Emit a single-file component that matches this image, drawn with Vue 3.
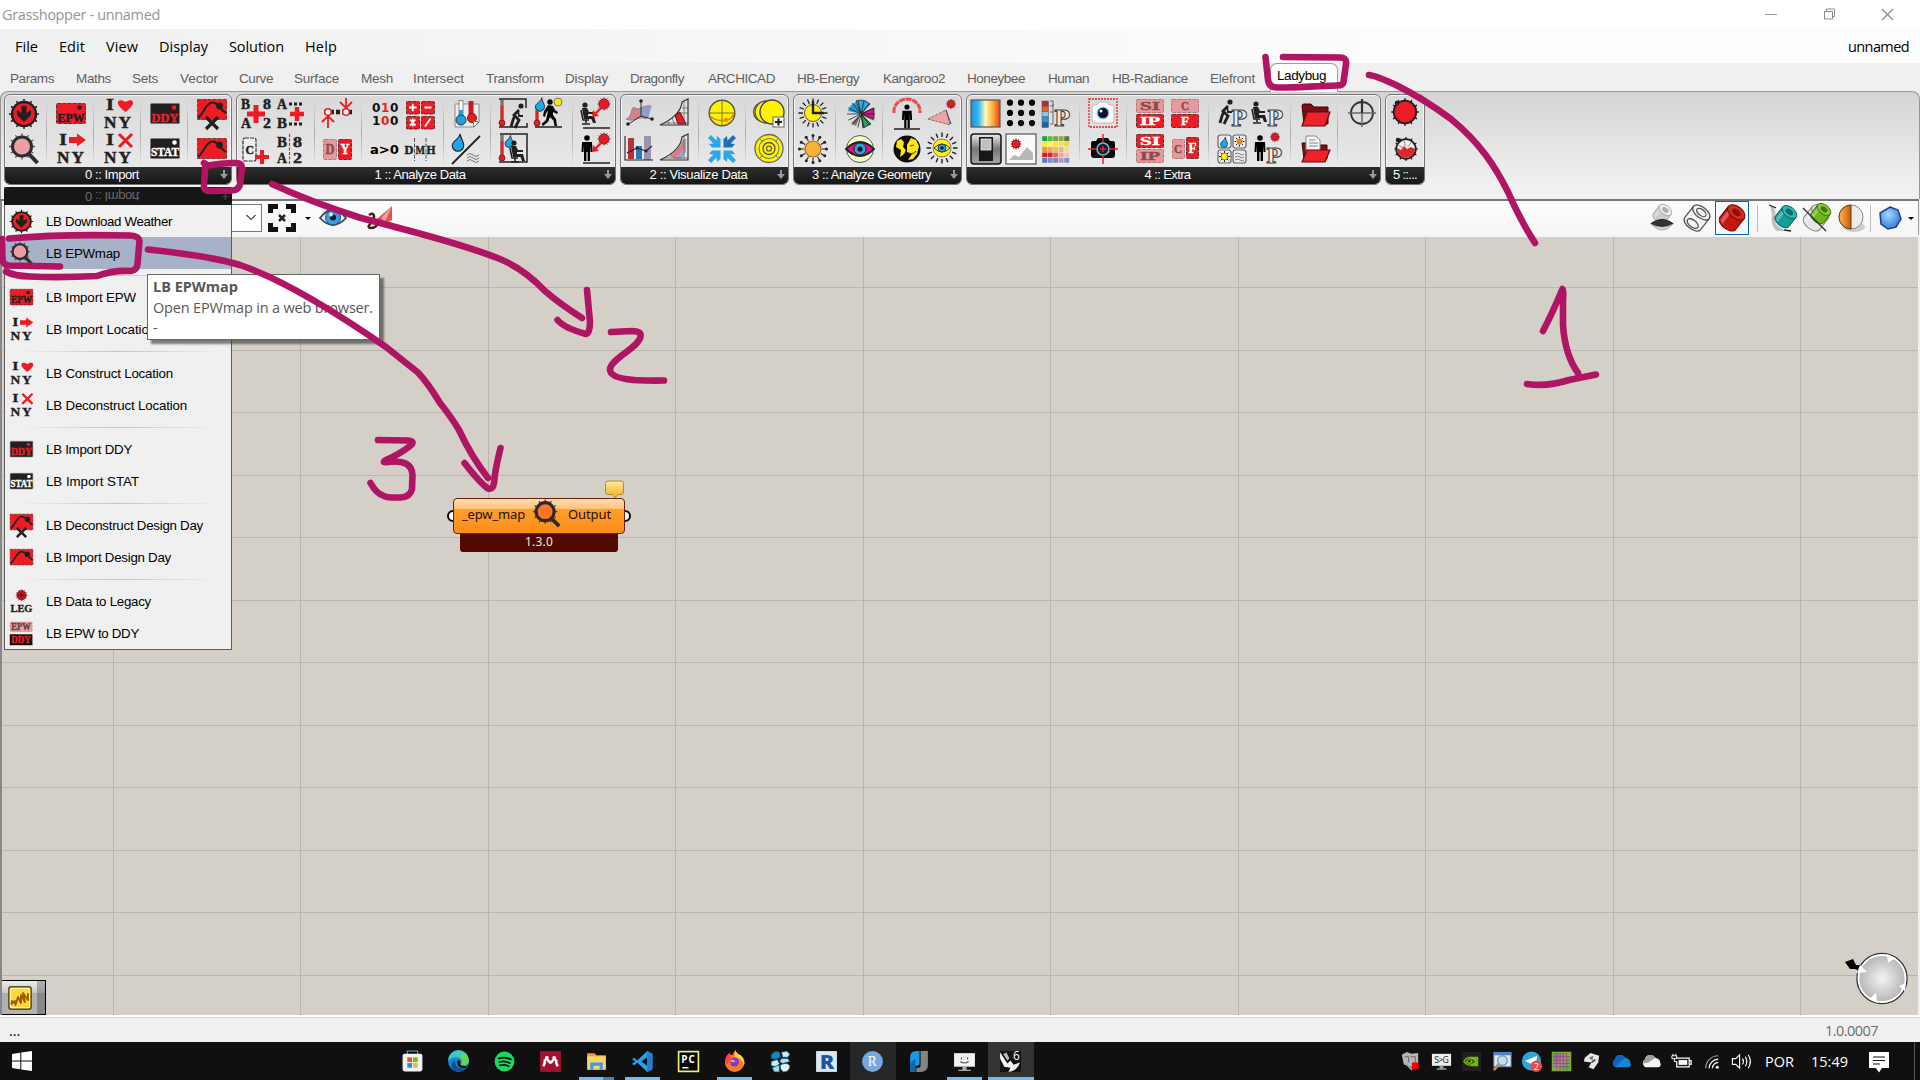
<script setup>
const RED = '#ed1c24'
const INK = '#231f20'
const PINK = '#e79a9e'

// Sets letter spacing so that a label takes the given width
const vFit = {
  mounted(el, { value }) {
    const natural = el.getBoundingClientRect().width
    const count = el.textContent.trim().length
    if (value && count > 1) el.style.letterSpacing = (value - natural) / count + 'px'
  }
}

/* ---------- small drawing helpers ---------- */
const T = (x, y, size, str, fill = INK, len = 0, extra = '') =>
  `<text x="${x}" y="${y}" font-family="'Liberation Serif',serif" font-weight="700" font-size="${(size * 1.14).toFixed(1)}" fill="${fill}" stroke="${fill}" stroke-width=".45" ${len ? `textLength="${len}" lengthAdjust="spacingAndGlyphs"` : ''} ${extra}>${str}</text>`
const ticks = (cx, cy, r1, r2, n, w = 1.4, c = INK, off = 0) => {
  let d = ''
  for (let i = 0; i < n; i++) {
    const a = ((i + off) * 2 * Math.PI) / n
    d += `M${(cx + r1 * Math.cos(a)).toFixed(1)} ${(cy + r1 * Math.sin(a)).toFixed(1)}L${(cx + r2 * Math.cos(a)).toFixed(1)} ${(cy + r2 * Math.sin(a)).toFixed(1)}`
  }
  return `<path d="${d}" stroke="${c}" stroke-width="${w}" fill="none"/>`
}
const plus = (x, y, s, w = 4) => `<path d="M${x - s} ${y}H${x + s}M${x} ${y - s}V${y + s}" stroke="${RED}" stroke-width="${w}"/>`
const line = (d, w = 2, c = INK, e = '') => `<path d="${d}" stroke="${c}" stroke-width="${w}" fill="none" ${e}/>`
const fill = (d, c = INK, e = '') => `<path d="${d}" fill="${c}" ${e}/>`
const box = (x, y, w, h, f, s = '#5b2224') => `<rect x="${x + .5}" y="${y + .5}" width="${w - 1}" height="${h - 1}" rx="1" fill="${f}" stroke="${s}" stroke-width=".9" stroke-dasharray="4 1"/>`
const circ = (x, y, r, f, s = 'none', w = 0) => `<circle cx="${x}" cy="${y}" r="${r}" fill="${f}" stroke="${s}" stroke-width="${w}"/>`
const orbit = (cx, cy, r, n, s) => Array.from({ length: n }, (_, i) => circ((cx + r * Math.cos(i * 2 * Math.PI / n)).toFixed(1), (cy + r * Math.sin(i * 2 * Math.PI / n)).toFixed(1), s, '#222')).join('')
const drop = (x, y, k = 1) => `<path transform="translate(${x} ${y}) scale(${k})" d="M2 -7C2 -3 5 -1 5 3A5 5 0 0 1 -5 3C-5 -1 1 -2 2 -7Z" fill="#1ba8e8" stroke="#222" stroke-width="1"/>`
const thermo = (x, y, h) => line(`M${x} ${y}V${y + h}`, 3.4, '#777') + line(`M${x} ${y + 6}V${y + h}`, 2.6, RED) + circ(x, y + h, 3, RED, '#6b1114', 0.8)
const bug = (x, y, r) => ticks(x, y, r, r + 1.6, 12, .8, '#701216') + circ(x, y, r, '#e21b23', '#8d1a20', 1)
const redArrow = (x, y) => line(`M${x + 8} ${y - 7}L${x + 2} ${y - 1}`, 2.4, RED) + fill(`M${x - 1} ${y + 2}L${x} ${y - 5}L${x + 6} ${y + 1}Z`, RED)
const peakShape = (dy) => `<rect x="1.500" y="${dy + .5}" width="29" height="20" fill="${RED}" stroke="#7b2a2d" stroke-width=".9" stroke-dasharray="4 1"/>` +
  line(`M2 ${dy + 19}C8 ${dy + 14} 10 ${dy + 4} 16 ${dy + 3.5}S22 ${dy + 9} 30 ${dy + 14}`, 2) + circ(23.5, dy + 7, 3.4, INK)
const sitter = (x, y) => circ(x + 4, y, 2.6, INK) + fill(`M${x + 1} ${y + 3}L${x + 6} ${y + 3}L${x + 8} ${y + 7}H${x + 13}V${y + 9}H${x + 7}V${y + 11}H${x + 13}L${x + 15} ${y + 18}H${x + 12}L${x + 10.5} ${y + 14}H${x + 3}Z`) +
  line(`M${x} ${y + 5}L${x + 2} ${y + 15}H${x + 8}M${x + 5} ${y + 15}V${y + 18}M${x + 1} ${y + 19}H${x + 9}`, 1.6)
const standing = (x, y, k = 1) => `<g transform="translate(${x} ${y}) scale(${k})"><circle cx="0" cy="0" r="2.8"/><path d="M-5 4H5L5.5 14H3.5L3 7V23H.6V14H-.6V23H-3V7L-3.5 14H-5.5Z"/></g>`
const walker = (x, y, k = 1) => `<g transform="translate(${x} ${y}) scale(${k})"><circle cx="0" cy="0" r="2.7"/><path d="M-2 3L3 4L5 8L8 10L7 12L3 10L3 13L6 17L7 24H4.5L3.5 18.5L0 15L-2 20L-7 24L-8.500 22L-4 18L-2 9L-4 11L-5 15L-7 14L-6 9Z"/></g>`
const bending = (x, y) => circ(x + 9, y, 2.6, INK) + line(`M${x + 7} ${y + 4}L${x + 2} ${y + 9}L${x + 7} ${y + 14}L${x + 3} ${y + 22}M${x + 3} ${y + 9}L${x + 1} ${y + 14}L${x - 1} ${y + 21}`, 2.8) + line(`M${x + 6} ${y + 5}L${x + 7} ${y + 10}L${x + 11} ${y + 10}`, 1.8)
const outlineP = (x, y, s = 22) => `<text x="${x}" y="${y}" font-family="'DejaVu Serif',serif" font-size="${s}" fill="#eee" stroke="#444" stroke-width="1.1" textLength="16" lengthAdjust="spacingAndGlyphs" font-weight="700">P</text>`
const tile = (x, y, w, h, str, on) => box(x, y, w, h, on ? RED : PINK, on ? '#5b2224' : '#b27072') + (str ? T(x + 4, y + h - 3, 11, str, on ? '#fff' : '#8d4a4d', w - 8) : '')
const waves = (x, y) => line(`M${x} ${y}q3-3 6 0t6 0M${x} ${y + 3}q3-3 6 0t6 0M${x} ${y + 6}q3-3 6 0t6 0`, 1, '#777')
const iny = T(4, 12, 15, 'I', INK, 8) + T(2, 30, 15, 'N', INK, 12.5) + T(16.500, 30, 15, 'Y', INK, 12.5)
const digit = (x, y, s, c = '#111') => `<text x="${x}" y="${y}" font-family="'DejaVu Sans',sans-serif" font-weight="700" font-size="13" fill="${c}" textLength="8.400" lengthAdjust="spacingAndGlyphs">${s}</text>`

const icons = {
  download: ticks(16, 16, 12, 15, 12, 1.5) + circ(16, 16, 12, RED, INK, 2.4) + fill('M13.500 8H18.500V15L23 12V17L16 24L9 17V12L13.500 15Z'),
  search: ticks(14, 13.500, 10, 13, 12, 1.3, '#555') + circ(14, 13.500, 9.500, '#eb9fa4', '#2d2d30', 3) + line('M21 21L29.500 30', 4, '#2d2d30'),
  searchOrange: ticks(14, 13.500, 10, 13, 12, 1.3, '#4a3a2c') + circ(14, 13.500, 9.600, '#ff7426', '#2b2b2b', 3.4) + line('M21 21L29 29', 4, '#2b2b2b'),
  epw: box(1, 5, 30, 21, RED) + circ(24.500, 9.500, 2.3, INK) + T(2.500, 23.500, 11.500, 'EPW', INK, 27),
  ny: iny + fill('M23.500 14C11 5 16 -1 23.500 4C31 -1 36 5 23.500 14Z', RED),
  nyArrow: iny + fill('M14 4H22V.5L31 7L22 13.500V10H14Z', RED),
  nyX: iny + line('M17 1L30 14M30 1L17 14', 3, RED),
  ddy: box(1, 5, 30, 21, INK, '#777') + circ(25, 9.500, 2.3, RED) + T(2.500, 23.500, 11.500, 'DDY', '#e5242b', 27),
  stat: box(1, 5, 30, 21, INK, '#777') + circ(25.500, 9.500, 2.3, '#fff') + T(2, 23, 10.500, 'STAT', '#fff', 28),
  ddCross: peakShape(1) + line('M10 19L22 31M22 19L10 31', 3.2),
  dd: peakShape(5),
  leg: bug(16, 8, 6) + ticks(16, 8, 0, 6, 9, .9, '#4a0d10') + T(2, 30, 11.500, 'LEG', INK, 28),
  epwddy: box(1, 1, 29, 13, '#e8a5a7', '#c08080') + T(3, 12, 10.500, 'EPW', '#6e3a3c', 25) + `<rect x="1" y="17" width="29" height="14" fill="#120a0a"/>` + T(3, 28.500, 11, 'DDY', '#e5242b', 25),

  ba82: T(1, 11, 12, 'B', INK, 9) + T(23, 11, 12, '8', INK, 8) + T(1, 30, 12, 'A', INK, 10) + T(23, 30, 12, '2', INK, 8) + plus(16, 16, 9, 5),
  abPlus: T(2, 11, 12, 'A', INK, 10) + T(2, 30, 12, 'B', INK, 10) + line('M14 6H27M14 26H27', 3, INK, 'stroke-dasharray="3 2"') + plus(22, 16, 7, 4.500),
  cPlus: `<rect x="3" y="5" width="13" height="23" rx="2" fill="#eee" stroke="#333" stroke-width="1.2" stroke-dasharray="4 1"/>` + T(5.500, 20.500, 11, 'C', '#222', 8.500) + plus(22, 24, 7, 4),
  ba82Split: T(2, 14, 13, 'B', INK, 10) + T(18, 14, 13, '8', INK, 9) + T(2, 30, 13, 'A', INK, 10) + T(18, 30, 13, '2', INK, 9) + line('M14.500 1V31', 1.2, RED, 'stroke-dasharray="3 1.500"'),
  rangeArrows: line('M2 14H30', 4.500, INK, 'stroke-dasharray="4 2"') + circ(6, 14, 3.300, '#fff', RED, 1.5) + circ(24, 14, 3.300, '#fff', RED, 1.500) + line('M24 0V9M18 4L24 10L30 4M6 30V18M0 24L6 18L12 24', 1.8, RED),
  dy: box(1, 6, 14, 21, PINK, '#b27072') + box(16, 6, 14, 21, RED) + T(3.500, 21, 12, 'D', '#8d4a4d', 9) + T(18.500, 21, 12, 'Y', '#fff', 9),
  binary: digit(3, 14, '0') + digit(12, 14, '1', RED) + digit(21, 14, '0') + digit(3, 27, '1') + digit(12, 27, '0', RED) + digit(21, 27, '0'),
  ops: [[2, 3, 'M5 9.500H12.500M8.750 5.700V13.300'], [17, 3, 'M20.500 9.500H27.500'], [2, 18, 'M6 21.500L11.500 27.500M11.500 21.500L6 27.500M8.750 20.500V28.500'], [17, 18, 'M26.500 20.500L21 28.500']].map(o => box(o[0], o[1], 14, 13.500, RED) + line(o[2], 1.8, '#fff')).join(''),
  agt0: `<text x="1" y="21" font-family="'DejaVu Sans',sans-serif" font-weight="700" font-size="13" textLength="29" lengthAdjust="spacingAndGlyphs">a&gt;0</text>`,
  dmh: T(.5, 20.500, 11.500, 'D', INK, 9) + T(11.500, 20.500, 11.500, 'M', INK, 9.500) + T(22.500, 20.500, 11.500, 'H', INK, 9) + line('M10.500 5V28M22 5V28', 1, '#555', 'stroke-dasharray="4 1.500"'),
  thermo2: `<path d="M4 6H28V24L23 29H4Z" fill="#ececec" stroke="#888"/>` + line('M10 2V20', 5, '#888') + line('M10 3V12', 3, '#fff') + line('M10 12V20', 4, '#1b9fe0') + circ(10, 22, 5, '#1b9fe0', '#333', 1) + line('M20 3V18', 5, '#c81a22') + circ(21, 20, 4.500, RED, '#7b1317', 1) + fill('M23 29L22 23L28 24Z', '#fff', 'stroke="#555" stroke-width=".8"'),
  dropWave: drop(7, 9, 1.15) + line('M1 31L29 3', 1.8) + waves(16, 22),
  bendRoom: thermo(4, 2, 23) + line('M1 1H28V10M1 29H29V25', 1.5) + bending(14, 8),
  walkHot: thermo(4, 7, 18) + drop(7, 6, .9) + circ(25, 4, 4, '#ffe600', '#777', 1) + walker(17, 4, 1) + line('M2 29H29', 1.4),
  sitRoom: thermo(4, 2, 23) + line('M2 1H29V29H1', 1.5) + drop(11, 8, .8) + sitter(12, 10),
  sitSun: sitter(1, 7) + bug(24, 6, 5) + redArrow(13, 17) + line('M3 30H30', 1.4),
  standSun: standing(7, 5) + bug(24, 6, 5) + redArrow(13, 17) + line('M3 30H30', 1.4),

  surface3d: fill('M2 21C8 20 6 11 10 9C14 14 20 6 27 8C24 13 26 19 22 21C15 17 10 25 2 21Z', '#cf8488', 'stroke="#777" stroke-width=".7"') + fill('M16 11C20 11 22 8 28 8C25 14 26 18 22 21C19 18 17 18 15 19Z', '#8fa0c8') + line('M17 3V18L3 27M17 18L28 21', .9) + circ(17, 3, 1.8, INK) + circ(4, 26, 1.8, INK) + circ(28, 21, 1.8, INK),
  psychRed: fill('M1 27C12 22 22 15 23 4L29 1V27Z', '#e3e3e3', 'stroke="#333" stroke-width="1.2"') + fill('M16 17L21 14L27 26H19Z', '#e11d25', 'stroke="#5a1013"') + line('M5 25H29M25 3V26M9 23L10 27M13 20L16 27M23 10H29M21 15H29', .7, '#555'),
  bars: `<rect x="4" y="5" width="6" height="21" fill="#b8303a"/><rect x="12" y="13" width="6" height="13" fill="#2679b5"/><rect x="20" y="3" width="7" height="24" fill="#9d92b0"/>` + line('M1 3V27H29M3 20L13 15L22 18L28 13', 1.1) + circ(13, 15, 1.5, INK) + circ(22, 18, 1.5, INK),
  psychBlue: fill('M1 27C12 22 22 15 23 4L29 1V27Z', '#e3e3e3', 'stroke="#333" stroke-width="1.2"') + fill('M10 23C18 18 22 12 24 6C28 10 25 20 16 26Z', '#d58086') + fill('M16 26C25 20 28 10 24 6L27 6V18L22 26Z', '#93a5cf') + line('M5 25H29M25 3V26', .7, '#555'),
  sunpath: circ(16, 15, 12.800, '#fff200', '#555', 1.5) + line('M16 2V28M3 15H29', 1, '#7a7500') + line('M4 18C8 22 14 23 20 22C25 22 27 18 28 15', 1.5, '#d08a12') + circ(20, 22, 2.200, '#f5871f'),
  spheres: circ(10, 14, 9.500, '#fff200', '#555', 1.3) + circ(13, 14, 11, '#fff200', '#555', 1.3) + circ(19, 14, 12, '#fff200', '#444', 1.4) + `<rect x="20" y="19" width="11" height="10" fill="#fff" stroke="#666"/>` + line('M22 24H29M25.500 20.500V27.500', 2.2),
  compress: [0, 90, 180, 270].map((r, i) => `<g transform="rotate(${r} 16 16)"><path d="M2 5L5 2L10.500 7.500L11 3L14.500 6V14.500H6L3 11L7.500 10.500Z" fill="${i === 1 ? '#1f6fb5' : '#28a8ea'}"/></g>`).join(''),
  rings: circ(16, 15.500, 14, '#fff200', '#666', 1.3) + circ(16, 15.500, 10, 'none', '#777', 1.1) + circ(16, 15.500, 6, 'none', '#555', 1.300) + circ(16, 15.500, 2.500, 'none', '#555', 1.2) + line('M7 6L10 9M25 6L22 9M7 25L10 22M25 25L22 22', 1, '#777'),
  sunHours: ticks(16, 15, 10, 14.500, 16, 1.300) + circ(16, 15, 8.500, '#fff200', '#555', 1) + line('M16 3V15H27', 2.4),
  rose: circ(17, 16, 13, '#dcdcdc') + fill('M17 16L4 13A13 13 0 0 1 12 4Z', '#1d9dd8') + fill('M17 16L12 3A14 14 0 0 1 26 6Z', '#29abe2', 'stroke="#222" stroke-width=".8"') + fill('M17 16L30 10V21Z', '#d6128a', 'stroke="#222" stroke-width=".8"') + fill('M17 16L27 26L19 30Z', '#22a565', 'stroke="#222" stroke-width=".8"') + fill('M17 16L12 28L7 25Z', '#777') + ticks(17, 16, 1, 14, 14, .8),
  body: line('M3 15V13A13 12 0 0 1 29 13V15', 3, '#ef4a50', 'stroke-dasharray="6 .7"') + standing(16, 9, .92) + line('M3 31H29', 1.5),
  shade: fill('M2 21L20 12L24 27Z', '#efa3a6', 'stroke="#777" stroke-width="1" stroke-dasharray="3 1"') + line('M20 12L25 26', 1, '#444') + bug(25, 6, 3.500),
  sunDots: ticks(16, 16, 9, 13, 12, 1.100) + orbit(16, 16, 13.500, 12, 1.500) + circ(16, 16, 8, '#fbb03b', '#9a6a22', 1.2),
  eyePink: circ(16, 16, 13.500, '#efffc8', '#555', 1) + fill('M2 16Q16 2 30 16Q16 30 2 16Z', '#e0148a', 'stroke="#222" stroke-width="1.8"') + circ(16, 16, 6, '#29a8e0', '#222', 1) + circ(16, 16, 2.600, '#111'),
  globe: circ(16, 16, 13.500, '#0c0c0c') + fill('M6 8L10 6L13 9L12 14L15 17L13 21L9 24L10 17L5 14Z', '#ffe612') + fill('M16 12L20 5L25 7L28 13L26 21L22 26L17 27L21 21L16 19Z', '#ffe612') + line('M19 13L23 12M19 20Q22 22 25 18', 1.1, '#4b4300'),
  sunEye: ticks(16, 15, 11, 15.500, 16, 1.400) + circ(16, 15, 9, '#fff200', '#777', 1) + fill('M8 15Q16 7 24 15Q16 23 8 15Z', '#e8f580', 'stroke="#333"') + circ(16, 15, 4, '#29a8e0', '#333', 1) + circ(16, 15, 1.700, '#111'),

  gradient: `<rect x="1" y="2" width="29" height="27" fill="url(#spectrum)" stroke="#555" stroke-width="1.2"/>`,
  dots: [5, 16, 27].map(y => [5, 16, 27].map(x => circ(x, y * .93, 3.1, '#080808')).join('')).join(''),
  legendP: ['#c1272d', '#f15a24', '#8cc7df', '#1b9fe0', '#1463a8'].map((c, i) => `<rect x="2" y="${3 + i * 5.300}" width="6.500" height="5.300" fill="${c}" stroke="#555" stroke-width=".5"/>`).join('') + line('M10 3H13V8H10M13 6V26H10M10 14H13', 1, '#666') + outlineP(14, 28),
  toggle: `<rect x="1" y="1" width="30" height="30" rx="3" fill="url(#metal)" stroke="#151515" stroke-width="1.500"/><rect x="9" y="4" width="14" height="24" fill="#171717"/><rect x="11" y="6" width="10" height="11" fill="#bfbfbf" stroke="#eee" stroke-width=".8"/>`,
  image: `<rect x="1" y="1" width="30" height="30" fill="#fafafa" stroke="#606060" stroke-width="1.300"/>` + bug(11, 11, 4) + fill('M4 27L9 22L14 24L22 14L28 20V27Z', '#b8b8b8'),
  palette: [['#16a05a', '#58b947', '#7ca04d', '#8ea651', '#5f7a38'], ['#f7e93b', '#fff25a', '#fbea3b', '#efdd6b', '#e8d650'], ['#f19a2a', '#f6a93b', '#f9b94d', '#e8b77a', '#f6d99b'], ['#c92228', '#d8262c', '#d86a6e', '#e8a7a9', '#efc3c5'], ['#6477b8', '#7d8bc8', '#8d7fc0', '#a89ad0', '#7e92cb']].map((r, j) => r.map((c, i) => `<rect x="${2 + i * 5.500}" y="${3 + j * 5.400}" width="5.500" height="5.400" fill="${c}" stroke="#f3f3c8" stroke-width=".4"/>`).join('')).join(''),
  cameraLight: `<rect x="2" y="1" width="28" height="28" fill="none" stroke="${RED}" stroke-width="1.300" stroke-dasharray="2 1"/><path d="M5 9Q5 7 7 7H10L12 4H20L22 7H25Q27 7 27 9V22Q27 25 24 25H8Q5 25 5 22Z" fill="#fafafa" stroke="#bbb"/>` + circ(16, 15, 6, '#174a85', '#ccc', 1) + circ(16, 15, 4.500, '#061525') + circ(14, 13, 1.500, '#fff'),
  cameraDark: `<path d="M4 10Q4 8 6 8H9L11 5H21L23 8H26Q28 8 28 10V22Q28 25 25 25H7Q4 25 4 22Z" fill="#090909"/>` + circ(16, 16, 6, '#13232b', '#78bcd4', 1.600) + line('M16 1V9M16 13V19M16 23V31M1 16H9M13 16H19M23 16H31', 1.500, RED),
  siIp: tile(2, 1, 28, 14, 'SI', false) + tile(2, 16, 28, 14, 'IP', true),
  siIp2: tile(2, 1, 28, 14, 'SI', true) + tile(2, 16, 28, 14, 'IP', false),
  cf: tile(2, 1, 28, 14, '', false) + tile(2, 16, 28, 14, '', true) + T(12, 12, 11, 'C', '#8d4a4d', 8) + T(12, 27, 11, 'F', '#fff', 8),
  cfSide: box(3, 6, 13, 20, PINK, '#b27072') + box(17, 4, 13, 22, RED) + T(5, 20, 11, 'C', '#8d4a4d', 8) + T(19.500, 20, 12, 'F', '#fff', 8),
  bendP: bending(5, 4) + outlineP(15, 28),
  sitP: sitter(0, 6) + outlineP(15, 28),
  climate: [[2, 2], [17, 2], [2, 17], [17, 17]].map(p => `<rect x="${p[0]}" y="${p[1]}" width="13" height="13" rx="2.500" fill="#eee" stroke="#666" stroke-width="1.200"/>`).join('') + drop(8, 9, .7) + ticks(23.500, 8.500, 3, 5, 8, 1) + circ(23.500, 8.500, 3, '#e8871e') + ticks(8.500, 23.500, 3, 5.500, 8, 1) + circ(8.500, 23.500, 3.500, '#fff200', '#555', .8) + line('M19 21q2.500-2 5 0t4 0M19 24q2.500-2 5 0t4 0M19 27q2.500-2 5 0t4 0', 1, '#777'),
  standP: standing(8, 5) + bug(23, 4, 3.500) + outlineP(14, 30, 21),
  folder: fill('M3 8Q3 6 5 6H12L15 9H29V26H5Z', '#7d0f14', 'stroke="#3c0709"') + fill('M3 28L8 14H31L26 28Z', '#ee2229', 'stroke="#5d0d10" stroke-width="1.200"'),
  folderDoc: fill('M3 10H9L12 12H28V26H5Z', '#7d0f14', 'stroke="#3c0709"') + `<path d="M7 3H17L21 7V20H7Z" fill="#f5f5f5" stroke="#888"/><path d="M10 7H16M10 10H19M10 13H19" stroke="#888" fill="none"/>` + fill('M3 29L8 17H31L26 29Z', '#ee2229', 'stroke="#5d0d10" stroke-width="1.200"'),
  target: circ(16, 15, 11, 'none', '#333', 1.800) + line('M16 1V29M2 15H30', 1.500, '#666') + line('M16 1V15', 2.200, '#333'),
  bugBig: ticks(16, 14, 11, 13.800, 12, 1.500) + circ(16, 14, 11.300, RED, INK, 1.800) + circ(8, 5, 2.300, INK),
  bugHalf: ticks(17, 16, 10, 12, 12, 1.200) + circ(17, 16, 9.800, '#eee', INK, 1.800) + fill('M8 15L12 17L15 13L18 16L22 14L26 16A9 9 0 0 1 8 16Z', '#e3222a') + ticks(17, 16, 3, 8, 7, .7, '#b3464a') + circ(9, 7, 2.300, INK)
}

const ribbon = [
  { title: '0 :: Import', w: 228, tw: 54, groups: [[['download'], ['search']], [['epw'], ['nyArrow']], [['ny'], ['nyX']], [['ddy'], ['stat']], [['ddCross'], ['dd']]] },
  { title: '1 :: Analyze Data', w: 380, tw: 91, groups: [[['ba82', 'abPlus'], ['cPlus', 'ba82Split']], [['rangeArrows'], ['dy']], [['binary', 'ops'], ['agt0', 'dmh']], [['thermo2'], ['dropWave']], [['bendRoom', 'walkHot'], ['sitRoom', '']], [['sitSun'], ['standSun']]] },
  { title: '2 :: Visualize Data', w: 169, tw: 98, groups: [[['surface3d', 'psychRed'], ['bars', 'psychBlue']], [['sunpath'], ['compress']], [['spheres'], ['rings']]] },
  { title: '3 :: Analyze Geometry', w: 169, tw: 119, groups: [[['sunHours'], ['sunDots']], [['rose'], ['eyePink']], [['body', 'shade'], ['globe', 'sunEye']]] },
  { title: '4 :: Extra', w: 415, tw: 46, groups: [[['gradient', 'dots', 'legendP'], ['toggle', 'image', 'palette']], [['cameraLight'], ['cameraDark']], [['siIp', 'cf'], ['siIp2', 'cfSide']], [['bendP', 'sitP'], ['climate', 'standP']], [['folder'], ['folderDoc']], [['target'], ['']]] },
  { title: '5 ::...', w: 40, tw: 24, small: true, groups: [[['bugBig'], ['bugHalf']]] }
]

const menu = [['File', 44, 23], ['Edit', 47, 26], ['View', 53, 32], ['Display', 70, 49], ['Solution', 76, 55], ['Help', 50, 32]]
const tabs = [['Params', 66, 44], ['Maths', 56, 35], ['Sets', 48, 26], ['Vector', 59, 38], ['Curve', 55, 34], ['Surface', 67, 45], ['Mesh', 52, 32], ['Intersect', 73, 51], ['Transform', 79, 58], ['Display', 65, 43], ['Dragonfly', 78, 54], ['ARCHICAD', 89, 67], ['HB-Energy', 86, 62], ['Kangaroo2', 84, 62], ['Honeybee', 81, 58], ['Human', 64, 41], ['HB-Radiance', 98, 76], ['Elefront', 60, 45]]

const dropdown = [
  ['download', 'LB Download Weather', 126], ['search', 'LB EPWmap', 74, true], null,
  ['epw', 'LB Import EPW', 90], ['nyArrow', 'LB Import Location', 110], null,
  ['ny', 'LB Construct Location', 127], ['nyX', 'LB Deconstruct Location', 141], null,
  ['ddy', 'LB Import DDY', 86], ['stat', 'LB Import STAT', 93], null,
  ['ddCross', 'LB Deconstruct Design Day', 157], ['dd', 'LB Import Design Day', 125], null,
  ['leg', 'LB Data to Legacy', 105], ['epwddy', 'LB EPW to DDY', 93]
]

const gridX = [113, 300, 488, 675, 863, 1050, 1238, 1425, 1613, 1800]
const gridY = [287, 350, 412, 475, 537, 600, 662, 725, 787, 850, 912, 975]

/* viewport display toggles, 30 x 30 */
const can = (c1, c2, c3) => `<g transform="rotate(38 15 15)"><path d="M5 8V22A10 5.500 0 0 0 25 22V8Z" fill="${c1}" stroke="${c3}"/><path d="M7 11V23Q9 25 11 26V13Z" fill="#fff" opacity=".3"/><ellipse cx="15" cy="8" rx="10" ry="6" fill="${c2}" stroke="${c3}"/><ellipse cx="15" cy="8" rx="5" ry="3" fill="${c3}" opacity=".75"/></g>`
const viewIcons = {
  hidden: `<g transform="translate(3.500 -1) scale(.78)">${can('#ccc', '#eee', '#999')}</g><path d="M3 21Q15 12 27 21Q15 27 3 21Z" fill="#333" stroke="#222"/><path d="M4 22Q15 34 26 22Q15 28 4 22Z" fill="#ddd" stroke="#888" stroke-width=".7"/>`,
  wire: `<g transform="rotate(38 15 15)" fill="#f5f5f5" stroke="#555" stroke-width="1.300"><path d="M5 8V22A10 5.500 0 0 0 25 22V8Z"/><ellipse cx="15" cy="8" rx="10" ry="5.500"/><ellipse cx="15" cy="8" rx="5.500" ry="3"/><ellipse cx="15" cy="22" rx="6.500" ry="3.500"/></g>`,
  shaded: can('#c9160c', '#d62c1f', '#6d0904'),
  teal: '<path d="M3 2Q10 5 8 14Q6 24 22 28L10 28Q3 22 5 12Z" fill="#999" opacity=".6"/><g transform="translate(6 1) scale(.85)">' + can('#149c98', '#25b9b2', '#07524f') + '</g><path d="M2 2L9 5M17 27L24 28" stroke="#222" stroke-width="1.300"/>',
  green: can('#e5e5e5', '#ddd', '#888') + '<g transform="translate(8 -1) scale(.78)">' + can('#6eb51c', '#86cd2b', '#2f5709') + '</g><path d="M2 5L25 28" stroke="#333" stroke-width="1.500"/>',
  half: '<ellipse cx="18" cy="24" rx="11" ry="5" fill="#bbb" opacity=".7"/><circle cx="15" cy="14" r="12" fill="#ececec" stroke="#888"/><path d="M15 2A12 12 0 0 0 15 26Z" fill="url(#orangeHalf)" stroke="#6d3a05"/>',
  poly: '<path d="M15 4L23 7L26 16L21 24L13 26L6 21L5 10Z" fill="url(#blueGem)" stroke="#233f8b" stroke-width="1.500"/>'
}

/* taskbar, 24 x 24 */
const task = [
  ['<path d="M7 5V2H17V5" fill="none" stroke="#3bb6e6"/><rect x="2.500" y="4.500" width="19" height="17" rx="2" fill="#f2f2f2"/><path d="M7 8H11.500V12.500H7Z" fill="#f25022"/><path d="M12.500 8H17V12.500H12.500Z" fill="#7fba00"/><path d="M7 13.500H11.500V18H7Z" fill="#1795d4"/><path d="M12.500 13.500H17V18H12.500Z" fill="#efb53c"/>'],
  ['<circle cx="12" cy="12" r="10" fill="#1686d9"/><path d="M2 11A10 10 0 0 1 22 11C22 15 18 17 14 15C17 11 13 7 9 8C5 8 3 11 2 11Z" fill="#3cc8c8"/><path d="M17 4A10 10 0 0 1 22 12C21 15 17 16.500 14 15C17 11 15 8 13 7Z" fill="#67d655"/><path d="M9 11C8 17 13 20 20 18C16 23 10 23 6 19C4 15 6 11 9 11Z" fill="#0d4f97"/><path d="M11 11C13 10 15 12 13.500 14.500C14 16 17 17 20 16L19 18C13 19 10 16 11 11Z" fill="#101010"/>'],
  ['<circle cx="12" cy="12" r="9.500" fill="#1ed760"/><path d="M6.500 9Q12 7 18 10M7 12.500Q12 11 17 13.500M7.500 15.700Q12 14.500 16 16.500" stroke="#101010" stroke-width="1.700" fill="none" stroke-linecap="round"/>'],
  ['<rect x="2" y="2" width="20" height="20" fill="#a5122f"/><path d="M5 16.500Q7 14 6.500 11Q8.500 8.500 10 11.500Q12 15 14 11.500Q15.500 8.500 17.500 11Q17 14 19 16.500M12 13V11" stroke="#fff" stroke-width="2.400" fill="none"/><circle cx="8.500" cy="8.500" r="1.800" fill="#fff"/><circle cx="15.500" cy="8.500" r="1.800" fill="#fff"/>'],
  ['<path d="M3 4H10L12 6H21V10H3Z" fill="#e9a12a"/><rect x="3" y="7" width="18" height="13" fill="#fbd36b"/><path d="M6 20V13H18V20H15V16H9V20Z" fill="#3b9be3"/>', 'split'],
  ['<path d="M16.500 2L21.500 4.500V19.500L16.500 22L7 13L4 15.500L2 14.500L5 12L2 9.500L4 8.500L7 11ZM16.500 8L11 12L16.500 16Z" fill="#2d9fe8" fill-rule="evenodd"/><path d="M16.500 2L21.500 4.500V19.500L16.500 22Z" fill="#1f80cf"/>', 'run'],
  ['<rect x="2.500" y="2.500" width="19" height="19" fill="#080808" stroke="#f3f169" stroke-width="1.600"/><text x="5" y="13" font-family="Open Sans,sans-serif" font-size="9.500" font-weight="700" fill="#fff" textLength="13">PC</text><path d="M6 18H12" stroke="#fff" stroke-width="1.400"/>'],
  ['<path d="M12 22A9.500 9.500 0 0 1 3 11Q4 6 7 4Q8 6 10 6Q11 3 13 1Q14 5 18 6Q22 10 21.500 14A9.500 9.500 0 0 1 12 22Z" fill="#ff7a1f"/><path d="M13 1Q14 5 18 6Q23 11 21 16Q19 8 12 8Z" fill="#ffd22e"/><path d="M3 11Q4 6 7 4L9 8L5 15Q3 13 3 11Z" fill="#ff3e48"/><circle cx="12" cy="12.500" r="4.300" fill="#7b3ad0"/><path d="M8 11Q11 9 13 12Q9 14 8 11Z" fill="#ffb12c"/>', 'run'],
  ['<g stroke="#0b4f6e" stroke-width=".7"><path d="M3 6Q6 1 11 3L12 8L7 10L3 9Z" fill="#1187bd"/><path d="M13 3L18 2L21 5L19 8L14 8Z" fill="#cde9f2"/><path d="M13 9L19 9L21 12L14 14L11 12Z" fill="#b7dded"/><path d="M3 12L9 10L11 14L8 17L3 16Z" fill="#cde9f2"/><path d="M12 15Q20 12 21 17Q20 22 15 22Q11 20 12 15Z" fill="#e5f4f8"/><path d="M4 18L11 15L11 22L6 22Z" fill="#a8d8ea"/></g>'],
  ['<rect x="2" y="2" width="20" height="20" fill="#dbe8f4"/><text x="5.500" y="19" font-family="Open Sans,sans-serif" font-size="18" font-weight="800" fill="#1b56a5" textLength="14" lengthAdjust="spacingAndGlyphs">R</text>'],
  ['<circle cx="12" cy="12" r="10" fill="#75a9dc"/><text x="7.500" y="16.500" font-family="Liberation Serif,serif" font-size="13" fill="#fff">R</text>', 'hover'],
  ['<path d="M4 22V8Q4 2 10 2H13V14Q13 16 11 16H9V22Z" fill="#189be2"/><path d="M4 22V14L9 9V22Z" fill="#0c68ad"/><path d="M14 2H21V15Q21 22 14 22H10V18H12Q14 18 14 15Z" fill="#858585"/>'],
  ['<rect x="2" y="4" width="20" height="13" fill="#f2f2f2"/><path d="M9 8V10M15 8V10M8 12Q12 15 16 12" stroke="#555" fill="none"/><path d="M10 17H14V20H18V21H6V20H10Z" fill="#aaa"/>', 'run'],
  ['<rect x="2" y="2" width="20" height="20" fill="#111"/><path d="M2 3L9 14L12 11L15 15L21 13Q20 18 14 21L10 22L12 18L6 17L2 9Z" fill="#f3f3f3"/><path d="M8 3L11 9L9 11L5 5Z" fill="#bbb"/><text x="14.500" y="10.500" font-family="Open Sans,sans-serif" font-size="11.500" fill="#fff">6</text>', 'active']
]
const tray = [
  '<path d="M3 5L8 2L13 4L20 3V14L14 18L5 15Z" fill="#b5b5b5"/><path d="M6 7H10V13M12 7H17V14" stroke="#666" fill="none"/><path d="M7 14L13 20L16 17" stroke="#8fa8c0" stroke-width="2" fill="none"/><rect x="13.500" y="13" width="7" height="7" fill="#f50000"/>',
  '<rect x="2" y="4" width="20" height="12.500" fill="#eee"/><text x="4.500" y="13.500" font-family="Open Sans,sans-serif" font-size="9" fill="#222" textLength="15">S&gt;G</text><path d="M10 16.500H14V19H17V20.500H7V19H10Z" fill="#999"/>',
  '<rect x="2" y="2" width="20" height="20" fill="#202020"/><rect x="11" y="7" width="8" height="10" fill="#76b900"/><path d="M4 12Q9 4 17 11Q11 20 4 12ZM7 12Q10 7 14 11Q10 16 7 12Z" fill="none" stroke="#76b900" stroke-width="1.400"/><path d="M12 10L15 12L12 14" stroke="#111" fill="none"/>',
  '<rect x="4" y="2.500" width="18" height="15" fill="#dde9f3" stroke="#587fb5"/><rect x="4" y="2.500" width="18" height="3" fill="#4c83ca"/><circle cx="13" cy="11" r="5" fill="#bfe2f2" stroke="#8094a5" stroke-width="1.400"/><path d="M9 15L4 21" stroke="#c98551" stroke-width="3"/>',
  '<circle cx="12" cy="11.500" r="10" fill="#2ca5df"/><path d="M5 11.500L18 6L16 17L11 14Z" fill="#fff"/><circle cx="17" cy="17" r="6" fill="#ea4b43"/><text x="14.300" y="20.500" font-family="Open Sans,sans-serif" font-size="9.500" fill="#fff">2</text>',
  '<rect x="2.500" y="2.500" width="19" height="19" fill="url(#chip)" stroke="#6cb52b" stroke-width="1.400"/><path d="M3 7H21M3 10.500H21M3 14H21M3 17.500H21M7 3V21M10.500 3V21M14 3V21M17.500 3V21" stroke="#3c4a55" stroke-width=".5"/>',
  '<path d="M5 8L11 3L20 6L19 13L14 20L9 18L12 13L4 12Z" fill="#e8e8e8"/><path d="M9 8L14 6L13 11Z" fill="#777"/><path d="M12 13L16 10" stroke="#333" stroke-width="1.500"/>',
  '<path d="M6 18A4.500 4.500 0 0 1 5 10A6 6 0 0 1 16 8Q21 9 21 13Q23 17 19 18Z" fill="#1686dc"/><path d="M6 18A4.500 4.500 0 0 1 5 10A6 6 0 0 1 16 8L10 13Z" fill="#1063bd"/>',
  '<path d="M6 18A4.500 4.500 0 0 1 5 10A6 6 0 0 1 16 8Q21 9 21 13Q23 17 19 18Z" fill="#f4f4f4"/><path d="M3 14A4.500 4.500 0 0 1 5 10A6 6 0 0 1 16 8L9 13Z" fill="#a0a0a0"/>',
  '<path d="M7 8.500H20V17.500H7V12M20 11H22V15H20" fill="none" stroke="#fff" stroke-width="1.300"/><rect x="9" y="10.500" width="9" height="5" fill="#fff"/><path d="M2 6H7V9H2ZM3 4V6M6 4V6M4.500 9V12H7" stroke="#fff" fill="none"/>',
  '<circle cx="18" cy="18" r="1.600" fill="#fff"/><path d="M13 19A6 6 0 0 1 19 13M9.500 19A10 10 0 0 1 19 9.500" fill="none" stroke="#fff" stroke-width="1.300"/><path d="M6 19A13 13 0 0 1 19 6" fill="none" stroke="#999" stroke-width="1.300"/>',
  '<path d="M2.500 9H6L10 5V19L6 15H2.500Z" fill="none" stroke="#fff" stroke-width="1.200"/><path d="M13 9Q15 12 13 15M16 7Q19 12 16 17M19 5Q23.500 12 19 19" fill="none" stroke="#fff" stroke-width="1.200"/>'
]

const strokes = [
  'M1283 57L1339 57.500Q1347 57 1346 64L1343.500 82Q1343 85.500 1337 85.500C1315 86 1290 88 1276 87.500Q1269 87 1268 80L1265.500 57',
  'M204 163L208 165.500Q223 162.500 236 163Q242 163 242 168L240 184Q239 190 232 190.500L209 191Q203 190.500 204 184L205.500 165',
  'M272 184C300 197 330 208 358 217C400 229 452 240 500 259Q524 269 545 291Q560 304 582 318',
  'M557.500 320Q564 328 586 334Q590 333 590 322L587 290',
  'M611 332L632 331Q642 331 640.500 337C638 348 609 360 610 370C611 380 637 381 664 380.500',
  'M2 239L2.500 259Q3 265 9 265.500L60 266.500',
  'M9 238.500Q60 234 130 235.500Q139 236 139.500 241L137.500 264Q137 270 131 271Q113 270 97 276Q60 278 30 276.500Q14 276 6 271.500',
  'M148 249.500Q210 256 240 265C290 282 350 322 386 347Q406 363 418 372.500Q428 383 440 403Q452 418 459 430C466 445 474 460 488 478',
  'M464.500 463Q480 483 488 488.500Q493 490 494 483Q495 470 500.500 448',
  'M378 440L408 440.500Q416 441 410 446Q400 454 385 460.500Q382 463 388 462Q412 459 412.500 475L412 489Q410 497 401 497.500Q386 498 383 495.500Q376 493 370.500 483',
  'M1369 75Q1374 75 1396 85Q1424 99 1451 119C1480 143 1495 166 1508 192C1518 215 1526 229 1535 243',
  'M1543 331Q1552 314 1562.500 289Q1564 290 1563 300V325Q1565 355 1578 373',
  'M1527 384Q1547 387 1569 380L1596 374.500'
]
</script>

<template>
  <div class="screen">
    <header class="titlebar">
      <span v-fit="158" class="app-title">Grasshopper - unnamed</span>
      <div class="window-buttons">
        <svg width="12" height="12"><path d="M0 6.500H12" stroke="#999" /></svg>
        <svg width="12" height="12"><path d="M1.500 3.500H9.500V11H1.500ZM3.500 3V1H11.500V8.500H10" fill="none" stroke="#888" /></svg>
        <svg width="13" height="13"><path d="M1 1L12 12M12 1L1 12" stroke="#888" stroke-width="1.200" /></svg>
      </div>
    </header>

    <nav class="menubar">
      <div v-for="m in menu" :key="m[0]" class="menu-item" :style="{ width: m[1] + 'px' }"><span v-fit="m[2]">{{ m[0] }}</span></div>
      <span v-fit="61" class="doc">unnamed</span>
    </nav>

    <nav class="tabs">
      <div v-for="t in tabs" :key="t[0]" class="tab" :style="{ width: t[1] + 'px' }"><span v-fit="t[2]">{{ t[0] }}</span></div>
      <div class="tab-active"><span v-fit="49">Ladybug</span></div>
    </nav>

    <section class="ribbon">
      <div v-for="p in ribbon" :key="p.title" class="panel" :style="{ width: p.w + 'px' }">
        <div class="panel-body">
          <div v-for="(g, gi) in p.groups" :key="gi" class="group">
            <div v-for="(row, ri) in g" :key="ri" class="group-row">
              <div v-for="(ic, ci) in row" :key="ci" class="cell">
                <svg v-if="ic" width="32" height="32" viewBox="0 0 32 32" v-html="icons[ic]"></svg>
              </div>
            </div>
          </div>
        </div>
        <div class="panel-title" :class="{ narrow: p.small }">
          <span v-fit="p.tw">{{ p.title }}</span>
          <svg v-if="!p.small" class="expand" width="10" height="12"><path d="M5 1V7" stroke="#999" stroke-width="2" /><path d="M1 5H9L5 10Z" fill="#999" /></svg>
        </div>
      </div>
    </section>

    <section class="toolbar">
      <div class="combo"><svg width="12" height="8"><path d="M1.500 1L6 5.500L10.500 1" fill="none" stroke="#444" stroke-width="1.100" /></svg></div>
      <svg class="extents" width="28" height="28"><path d="M2.500 9V2.500H10M18 2.500H25.500V9M25.500 19V25.500H18M10 25.500H2.500V19" fill="none" stroke="#111" stroke-width="5" /><path d="M11 11L17 17M17 11L11 17" stroke="#222" stroke-width="2.500" /></svg>
      <i class="caret"></i>
      <svg class="eye" width="30" height="24"><path d="M2 12Q15 -5 28 12Q15 26 2 12Z" fill="#edf4f8" stroke="#39464e" stroke-width="1.800" /><circle cx="15" cy="11.500" r="7.500" fill="#3a9be0" stroke="#174d7d" /><circle cx="15" cy="11.500" r="3" fill="#0a1c30" /><circle cx="13" cy="8.500" r="2" fill="#d9f2ff" /></svg>
      <i class="caret second"></i>
      <svg class="pen" width="30" height="28"><path d="M12 15L27 2L27 16L17 21Z" fill="#dc5550" /><path d="M16 14L27 2L20 18Z" fill="#f3a09a" /><path d="M4 11Q8 8 9 12Q9 17 5 20Q2 24 6 24Q11 24 13 19" fill="none" stroke="#4a1a14" stroke-width="2.600" /></svg>
      <div class="views">
        <div class="view"><svg width="28" height="30" viewBox="0 0 30 30" v-html="viewIcons.hidden"></svg></div>
        <div class="view"><svg width="30" height="30" v-html="viewIcons.wire"></svg></div>
        <div class="view selected"><svg width="30" height="30" v-html="viewIcons.shaded"></svg></div>
        <i class="rule"></i>
        <div class="view teal"><svg width="30" height="30" v-html="viewIcons.teal"></svg></div>
        <div class="view"><svg width="30" height="30" v-html="viewIcons.green"></svg></div>
        <div class="view"><svg width="30" height="30" v-html="viewIcons.half"></svg></div>
        <i class="rule tight"></i>
        <div class="view gem"><svg width="30" height="30" v-html="viewIcons.poly"></svg></div>
        <i class="caret"></i>
      </div>
    </section>

    <main class="canvas">
      <svg class="grid" width="1916" height="778" viewBox="2 237 1916 778">
        <rect v-for="x in gridX" :key="'x' + x" :x="x" y="237" width="1" height="778" fill="#bab6af" />
        <rect v-for="y in gridY" :key="'y' + y" x="2" :y="y" width="1916" height="1" fill="#bab6af" />
      </svg>

      <div class="node">
        <svg class="balloon" width="20" height="20"><path d="M3 1H16Q18.500 1 18.500 3.500V12Q18.500 14.500 16 14.500H13L10 18L7 14.500H3Q.5 14.500 .5 12V3.500Q.5 1 3 1Z" fill="url(#gold)" stroke="#b58a2b" /></svg>
        <i class="grip left"></i><i class="grip right"></i>
        <div class="node-body">
          <span v-fit="63">_epw_map</span>
          <svg width="30" height="30" viewBox="0 0 32 32" v-html="icons.searchOrange"></svg>
          <span v-fit="43">Output</span>
        </div>
        <div class="node-foot"><span v-fit="28">1.3.0</span></div>
      </div>

      <div class="markov">
        <svg width="24" height="24"><rect x=".8" y=".8" width="22.400" height="22.400" rx="2.500" fill="#ffd83a" stroke="#5d4f22" stroke-width="1.500" /><rect x="2.500" y="2.500" width="19" height="19" fill="none" stroke="#fff1a0" /><path d="M4 15L3.500 18L7 15L7.500 19L10 11L13 17L13 9L17 16L15 7L20 14V8" fill="none" stroke="#a35a08" stroke-width="1.900" stroke-linejoin="round" stroke-linecap="round" /></svg>
      </div>

      <svg class="compass" width="66" height="56"><path d="M1 11L9 8L12 14L16 14L16 20L11 18L6 18Z" fill="#000" /><circle cx="38" cy="27.500" r="25" fill="url(#dial)" stroke="#333" stroke-width="1.400" /><circle cx="38" cy="27.500" r="23.500" fill="none" stroke="#fff" stroke-width="1.800" /><path d="M43 3L51 7L44 12ZM62 32L55 35L61 40ZM33 52L25 48L32 42ZM13 22L16 14L23 21Z" fill="#fff" /></svg>
    </main>

    <footer class="status"><span class="dots">...</span><span v-fit="53" class="version">1.0.0007</span></footer>

    <footer class="taskbar">
      <svg class="start" width="20" height="20"><path d="M0 3L8.300 1.800V9.400H0ZM9.300 1.600L20 0V9.400H9.300ZM0 10.400H8.300V18.200L0 17ZM9.300 10.400H20V20L9.300 18.400Z" fill="#fff" /></svg>
      <div class="apps">
        <div v-for="(a, i) in task" :key="i" class="app" :class="a[1]"><svg width="25" height="25" viewBox="0 0 24 24" v-html="a[0]"></svg></div>
      </div>
      <div class="tray">
        <div v-for="(a, i) in tray" :key="i" class="tray-cell"><svg width="23" height="23" viewBox="0 0 24 24" v-html="a"></svg></div>
        <span v-fit="28" class="lang">POR</span>
        <span v-fit="34" class="clock">15:49</span>
        <svg class="note" width="20" height="21"><path d="M0 0H20V16H13L10 20.500L7 16H0Z" fill="#fff" /><path d="M4 5H16M4 8.500H16M4 12H11" stroke="#111" stroke-width="1.200" /></svg>
        <i class="desk"></i>
      </div>
    </footer>

    <aside class="dropdown">
      <div class="drop-head"><span v-fit="54">0 :: Import</span><b>+</b></div>
      <template v-for="(d, i) in dropdown" :key="i">
        <div v-if="d" class="drop-item" :class="{ hot: d[3] }">
          <svg width="25" height="25" viewBox="0 0 32 32" v-html="icons[d[0]]"></svg>
          <span v-fit="d[2]">{{ d[1] }}</span>
        </div>
        <div v-else class="drop-rule"></div>
      </template>
    </aside>

    <div class="tooltip">
      <b><span v-fit="85">LB EPWmap</span></b>
      <p><span v-fit="220">Open EPWmap in a web browser.</span></p>
      <p>-</p>
    </div>

    <svg class="ink" width="1920" height="1080">
      <defs>
        <linearGradient id="spectrum"><stop offset="0" stop-color="#1b8fe0" /><stop offset=".25" stop-color="#35b8f0" /><stop offset=".5" stop-color="#fff8b8" /><stop offset=".75" stop-color="#fbb03b" /><stop offset="1" stop-color="#e8421e" /></linearGradient>
        <linearGradient id="metal" x2="0" y2="1"><stop offset="0" stop-color="#efefef" /><stop offset=".5" stop-color="#777" /><stop offset="1" stop-color="#a5a5a5" /></linearGradient>
        <linearGradient id="orangeHalf"><stop offset="0" stop-color="#ffb45a" /><stop offset="1" stop-color="#c25b06" /></linearGradient>
        <radialGradient id="blueGem" cx=".4" cy=".35"><stop offset="0" stop-color="#a5daff" /><stop offset="1" stop-color="#4a8fe0" /></radialGradient>
        <linearGradient id="gold" x2="0" y2="1"><stop offset="0" stop-color="#ffe9a0" /><stop offset="1" stop-color="#eeb014" /></linearGradient>
        <radialGradient id="dial"><stop offset="0" stop-color="#f4f4f4" /><stop offset="1" stop-color="#b2b2b2" /></radialGradient>
        <linearGradient id="chip" x2="1" y2="1"><stop offset="0" stop-color="#a04fc0" /><stop offset=".5" stop-color="#d07a90" /><stop offset="1" stop-color="#50b060" /></linearGradient>
      </defs>
      <path v-for="(s, i) in strokes" :key="i" :d="s" />
    </svg>
  </div>
</template>

<style>
html, body { margin: 0; overflow: hidden; }
</style>

<style scoped>
.screen { position: relative; width: 1920px; height: 1080px; overflow: hidden; display: flex; flex-direction: column; background: #f0f0f0; font-family: "Open Sans", "Noto Sans", sans-serif; color: #000; }
.screen * { box-sizing: border-box; }
span { white-space: nowrap; display: inline-block; }
svg { display: block; flex: none; overflow: visible; }

.titlebar { height: 29px; flex: none; background: #fff; display: flex; align-items: center; justify-content: space-between; padding: 0 26px 0 2px; }
.app-title { font-size: 14.5px; color: #969696; }
.window-buttons { display: flex; gap: 46px; }

.menubar { height: 34px; flex: none; display: flex; align-items: center; padding: 0 11px 0 15px; font-size: 14.5px; background: linear-gradient(90deg, #f0f0f0, #fdfdfd 75%); }
.menu-item { flex: none; }
.doc { margin-left: auto; }

.tabs { height: 28px; flex: none; display: flex; align-items: center; padding-left: 10px; font: 13.5px "Liberation Sans", Arial, sans-serif; color: #5f5f5f; }
.tab { flex: none; padding-top: 2px; }
.tab-active { height: 29px; width: 68px; margin-top: 1px; padding: 4px 0 0 6px; background: #fff; border: 1px solid #999; border-bottom: 0; border-radius: 7px 7px 0 0; color: #000; z-index: 1; }

.ribbon { height: 108px; flex: none; display: flex; gap: 4px; padding: 2px 0 0 3px; border: 1px solid #979797; border-bottom: 0; border-radius: 8px 8px 0 0; background: linear-gradient(#d4d4d4, #f0f0f0 90px); }
.panel { height: 91px; flex: none; display: flex; flex-direction: column; border: 1px solid #777; border-radius: 6px; overflow: hidden; background: linear-gradient(#d9d9d9, #ececec); box-shadow: inset 0 0 0 1px #f5f5f5; }
.panel-body { height: 72px; flex: none; display: flex; padding: 3px 0 0 1px; }
.group { flex: none; margin-right: 11.75px; position: relative; }
.group:not(:last-child)::after { content: ""; position: absolute; right: -6px; top: 2px; width: 1px; height: 66px; background: linear-gradient(transparent, #aaa, transparent); }
.group-row { display: flex; height: 34.5px; }
.cell { width: 35.25px; display: flex; justify-content: center; }
.panel-title { flex: 1; position: relative; margin: 0 -1px; display: flex; justify-content: center; align-items: center; padding: 0 12px 2px 0; background: linear-gradient(#2e2e2e, #161616); color: #fff; font: 13px "Liberation Sans", Arial, sans-serif; }
.panel-title.narrow { padding: 0 0 3px; }
.expand { position: absolute; right: 3px; top: 2px; }

.toolbar { height: 38px; flex: none; display: flex; align-items: center; padding-bottom: 2px; border-top: 2px solid #777; border-left: 2px solid #888; margin-right: 1px; background: linear-gradient(#fdfdfd, #f5f5f5); }
.combo { width: 258px; height: 28px; margin-left: 2px; border: 1px solid #777; background: #fff; display: flex; align-items: center; justify-content: flex-end; padding-right: 4px; }
.extents { margin-left: 6px; }
.caret { flex: none; margin-left: 9px; border: 3px solid transparent; border-top: 3px solid #000; border-bottom: 0; }
.eye { margin-left: 7px; }
.caret.second { margin-left: 6px; }
.pen { margin-left: 5px; }
.views { margin-left: auto; height: 100%; display: flex; align-items: center; padding-right: 4px; border-right: 1px solid #999; }
.view { width: 34px; height: 34px; margin-right: 1px; display: flex; align-items: center; justify-content: center; }
.view.teal { width: 32px; }
.view.gem { width: 32px; margin-right: 0; }
.selected { border: 1px solid #0a64ad; background: #f4f8fb; margin-right: 8px; }
.rule { width: 1px; height: 27px; background: #bbb; margin-right: 8px; }
.rule.tight { margin: 0 3px 0 1px; }
.views .caret { margin-left: 2px; }

.canvas { position: relative; height: 778px; flex: none; margin-right: 2px; border-left: 2px solid #888; background: #d4d0c8; }
.grid { position: absolute; left: 0; top: 0; }
.node { position: absolute; left: 451px; top: 261px; width: 172px; }
.node-body { position: relative; height: 36px; display: flex; align-items: center; justify-content: space-between; padding: 0 13px 4px 8px; border: 1px solid #6b1d08; border-radius: 4px; background: linear-gradient(#ffe0b8, #ffc176 28%, #ff9d2c 30%, #fb8f18); font: 13px "Noto Sans", sans-serif; color: #241000; }
.node-foot { width: 158px; height: 19px; margin: -1px 0 0 7px; border-radius: 0 0 3px 3px; background: #520a00; color: #f3e5e0; display: flex; align-items: center; justify-content: center; padding-bottom: 2px; font: 12px "Noto Sans", sans-serif; }
.balloon { position: absolute; left: 152px; top: -18px; z-index: 2; }
.grip { position: absolute; top: 12px; width: 12px; height: 12px; border: 2px solid #000; border-radius: 50%; background: #fff; }
.grip.left { left: -6px; }
.grip.right { right: -6px; }
.markov { position: absolute; left: 0; bottom: 0; width: 44px; height: 35px; border: 1px solid #000; border-left: 0; padding: 5px 0 0 6px; background: linear-gradient(90deg, transparent 35px, rgba(60, 60, 60, .35) 35px), linear-gradient(#ececec, #c9c9c9 36%, #b0b0b0 37%, #b3b3b3); }
.compass { position: absolute; left: 1842px; top: 714px; }

.status { height: 27px; flex: none; display: flex; align-items: center; justify-content: space-between; padding: 2px 42px 0 9px; font-size: 14.5px; border-top: 1px solid #fff; box-shadow: inset 0 1px #fff, inset 0 2px #d8d8d8; }
.version { color: #6d6d6d; }

.taskbar { height: 38px; flex: none; display: flex; align-items: center; background: #101010; color: #fff; }
.start { margin-left: 12px; }
.apps { margin-left: 357.5px; display: flex; height: 100%; }
.app { position: relative; width: 46px; height: 100%; display: flex; align-items: center; justify-content: center; }
.app.hover { background: #272727; }
.app.active { background: #333; }
.app.run::after, .app.split::after, .app.active::after { content: ""; position: absolute; bottom: 0; left: 5px; right: 6px; height: 3px; background: #76b9ed; }
.app.split::after { background: linear-gradient(90deg, #76b9ed 24px, #4f7fa8 24px); }
.app.active::after { left: 0; right: 0; }
.tray { margin-left: auto; height: 100%; display: flex; align-items: center; font-size: 14.5px; }
.tray-cell { width: 30.1px; display: flex; justify-content: center; }
.lang { margin-left: 8px; width: 28px; }
.clock { margin-left: 18px; width: 34px; }
.note { margin: 3px 25px 0 24px; }
.desk { width: 1px; height: 100%; background: #555; margin-right: 5px; }

.dropdown { position: absolute; left: 4px; top: 187px; width: 228px; border: 1px solid #5c5c5c; background: #f0f0f0; font: 13.3px "Liberation Sans", Arial, sans-serif; }
.drop-head { height: 18px; margin: -1px -1px 0; background: #161616; border-radius: 4px 4px 0 0; color: #6a6a6a; display: flex; align-items: center; justify-content: center; padding-right: 12px; position: relative; font-size: 13px; }
.drop-head span { transform: scaleY(-1); }
.drop-head b { position: absolute; right: 3px; color: #444; }
.drop-item { height: 32px; display: flex; align-items: center; padding-left: 4px; gap: 12px; }
.drop-item.hot { background: #a7b2c8; }
.drop-rule { height: 12px; background: linear-gradient(90deg, transparent 5%, #c4c4c4 50%, transparent 95%) center / 100% 1px no-repeat; }

.tooltip { position: absolute; left: 147px; top: 274px; width: 233px; height: 66px; border: 1px solid #666; background: #fff; box-shadow: 4px 4px 2px rgba(60, 60, 60, .65); color: #575757; padding: 2px 0 0 5px; font-size: 14.5px; line-height: 20.5px; }
.tooltip b, .tooltip p { display: block; margin: 0; height: 20.5px; }

.ink { position: absolute; left: 0; top: 0; pointer-events: none; z-index: 5; }
.ink > path { fill: none; stroke: #b01563; stroke-width: 6.6; stroke-linecap: round; stroke-linejoin: round; }
</style>
